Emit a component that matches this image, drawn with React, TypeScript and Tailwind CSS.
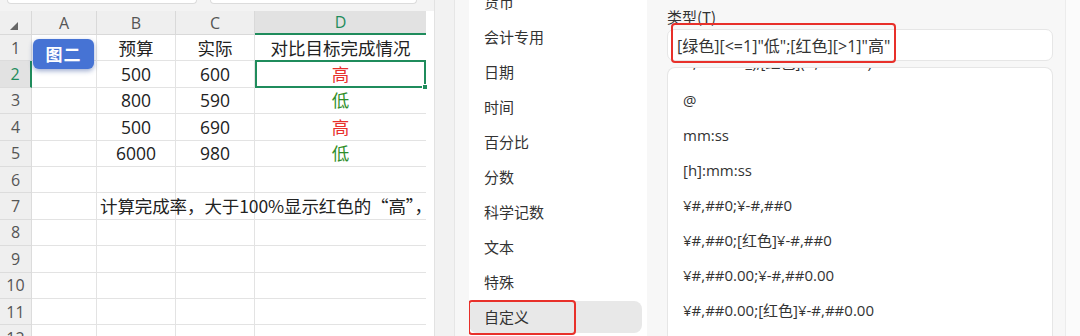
import React from "react";

type Row = { n: number; b?: string; c?: string; d?: string; dc?: string; long?: string };

const RED = "text-[#e8302c]";
const GREEN = "text-[#2f8f2a]";

const rows: Row[] = [
  { n: 1, b: "预算", c: "实际", d: "对比目标完成情况" },
  { n: 2, b: "500", c: "600", d: "高", dc: RED },
  { n: 3, b: "800", c: "590", d: "低", dc: GREEN },
  { n: 4, b: "500", c: "690", d: "高", dc: RED },
  { n: 5, b: "6000", c: "980", d: "低", dc: GREEN },
  { n: 6 },
  { n: 7, long: "计算完成率，大于100%显示红色的“高”，" },
  { n: 8 },
  { n: 9 },
  { n: 10 },
  { n: 11 },
  { n: 12 },
];

const categories = ["货币", "会计专用", "日期", "时间", "百分比", "分数", "科学记数", "文本", "特殊", "自定义"];

const formats = [
  "#,##0.00_);[红色](#,##0.00)",
  "@",
  "mm:ss",
  "[h]:mm:ss",
  "¥#,##0;¥-#,##0",
  "¥#,##0;[红色]¥-#,##0",
  "¥#,##0.00;¥-#,##0.00",
  "¥#,##0.00;[红色]¥-#,##0.00",
  "¥#,##0.00;[红色]¥-#,##0.00",
];

function Sheet() {
  return (
    <div className="relative w-[434px] h-[336px] shrink-0 flex flex-col bg-white text-[#222] font-['Open_Sans','Noto_Sans_CJK_SC',sans-serif]">
      {/* top strip with name box and formula bar */}
      <div className="relative h-[11px] shrink-0 bg-[#f3f3f3] flex items-start gap-[13px] pl-[7px]">
        <div className="w-[190px] h-[4px] bg-white border border-t-0 border-[#dcdcdc] rounded-b-[6px]" />
        <div className="w-[207px] h-[4px] bg-white border border-t-0 border-[#dcdcdc] rounded-b-[6px]" />
      </div>
      {/* column header */}
      <div className="flex h-[24px] shrink-0 text-[16px] text-[#555]">
        <div className="w-[32px] bg-[#efefef] border-r border-b border-[#d9d9d9] flex items-center justify-center">
          <svg width="8" height="8" viewBox="0 0 8 8" className="mt-[6px] ml-[-4px]">
            <polygon points="8,0 8,8 0,8" fill="#666" />
          </svg>
        </div>
        <div className="w-[65px] bg-[#efefef] border-r border-b border-[#d9d9d9] flex items-center justify-center">A</div>
        <div className="w-[79px] bg-[#efefef] border-r border-b border-[#d9d9d9] flex items-center justify-center">B</div>
        <div className="w-[79px] bg-[#efefef] border-r border-b border-[#d9d9d9] flex items-center justify-center">C</div>
        <div className="w-[171px] bg-[#e2e2e2] border-b-2 border-[#1f8c5c] flex items-center justify-center text-[#1f8c5c]">D</div>
        <div className="w-[8px] bg-white" />
      </div>
      {/* rows */}
      {rows.map((r) => {
        const sel = r.n === 2;
        return (
          <div key={r.n} className="flex h-[26.4px] shrink-0 text-[17.5px]">
            <div
              className={
                sel
                  ? "w-[32px] bg-[#e2e2e2] border-r-2 border-r-[#1f8c5c] border-b border-b-[#dcdcdc] flex items-center justify-center text-[16px] text-[#1f8c5c]"
                  : "w-[32px] bg-[#efefef] border-r border-b border-[#dcdcdc] flex items-center justify-center text-[16px] text-[#555]"
              }
            >
              {r.n}
            </div>
            <div className="w-[65px] border-r border-b border-[#e3e3e3]" />
            <div className="relative w-[79px] border-r border-b border-[#e3e3e3] flex items-center justify-center">
              {r.long ? (
                <span className="absolute left-[3px] top-0 h-full flex items-center whitespace-nowrap z-10 font-['Noto_Sans_CJK_SC',sans-serif] text-[17.5px] tracking-[-0.1px]">
                  {r.long}
                </span>
              ) : (
                r.b
              )}
            </div>
            <div className="w-[79px] border-r border-b border-[#e3e3e3] flex items-center justify-center">{r.c}</div>
            <div className={"relative w-[171px] border-b border-[#e3e3e3] flex items-center justify-center " + (r.dc ?? "")}>
              {r.d}
              {sel && (
                <>
                  <div className="absolute left-0 right-0 top-[-1px] bottom-[-1px] border-2 border-[#1f8c5c]" />
                  <div className="absolute right-[-2px] bottom-[-3px] w-[6px] h-[6px] bg-[#1f8c5c] border border-white" />
                </>
              )}
            </div>
            <div className="w-[8px] bg-white" />
          </div>
        );
      })}
      {/* floating badge */}
      <div className="absolute left-[33px] top-[39px] w-[61px] h-[30px] rounded-[6px] bg-[#4673d4] shadow-[0_2px_5px_rgba(40,70,150,0.45)] flex items-center justify-center text-white font-bold text-[17px] tracking-[1px] font-['Noto_Sans_CJK_SC',sans-serif] z-20">
        图二
      </div>
    </div>
  );
}

function Dialog() {
  return (
    <div className="relative z-30 flex h-[336px] flex-1 bg-[#f7f7f7] text-[#333] font-['Open_Sans','Noto_Sans_CJK_SC',sans-serif] overflow-hidden">
      {/* shadow / border zone */}
      <div className="w-[21px] shrink-0 bg-[#f2f2f2] border-l border-[#e2e2e2] border-r border-r-[#e6e6e6]" />
      <div className="w-[14px] shrink-0" />
      {/* category card */}
      <div className="w-[178px] shrink-0 bg-white h-full overflow-hidden">
        <div className="mt-[-15.5px] flex flex-col">
          {categories.map((c) => {
            const sel = c === "自定义";
            return (
              <div key={c} className="relative h-[35px] shrink-0 flex items-center">
                {sel && <div className="absolute left-0 right-[5px] top-[1.5px] bottom-[1.5px] rounded-[8px] bg-[#e8e8e8]" />}
                <span className="relative pl-[15px] text-[15px] font-['Noto_Sans_CJK_SC',sans-serif] text-[#333]">{c}</span>
                {sel && (
                  <div className="absolute left-[-1px] top-0 w-[108px] h-[35px] border-[2.5px] border-[#e8302a] rounded-[4px]" />
                )}
              </div>
            );
          })}
        </div>
      </div>
      <div className="w-[20px] shrink-0" />
      {/* right column */}
      <div className="w-[386px] shrink-0 flex flex-col">
        <div className="h-[29px] shrink-0 pt-[6px] leading-[22px] text-[15px] font-['Noto_Sans_CJK_SC',sans-serif]">类型(T)</div>
        <div className="relative h-[32px] shrink-0 bg-white border border-[#e6e6e6] rounded-[7px] flex items-center pl-[9px] pt-[2px] text-[16px] text-[#333] whitespace-nowrap">
          [绿色][&lt;=1]"低";[红色][&gt;1]"高"
          <div className="absolute left-[3px] top-[-7px] w-[225px] h-[40px] border-[2.5px] border-[#e8302a] rounded-[4px]" />
        </div>
        <div className="mt-[6px] flex-1 bg-white border border-b-0 border-[#e6e6e6] rounded-t-[8px] overflow-hidden">
          <div className="mt-[-20px] flex flex-col">
            {formats.map((f, i) => (
              <div
                key={i}
                className={
                  i === 0
                    ? "h-[35px] shrink-0 flex items-center pl-[15px] text-[15px] text-[#333] whitespace-nowrap -translate-y-[3px]"
                    : "h-[35px] shrink-0 flex items-center pl-[15px] text-[15px] text-[#333] whitespace-nowrap"
                }
              >
                {f}
              </div>
            ))}
          </div>
        </div>
      </div>
      <div className="w-[12px] shrink-0" />
      <div className="flex-1 bg-[#fbfbfb] border-l border-[#ececec]" />
    </div>
  );
}

export default function App() {
  return (
    <div className="w-[1080px] h-[336px] flex overflow-hidden bg-white">
      <Sheet />
      <Dialog />
    </div>
  );
}
